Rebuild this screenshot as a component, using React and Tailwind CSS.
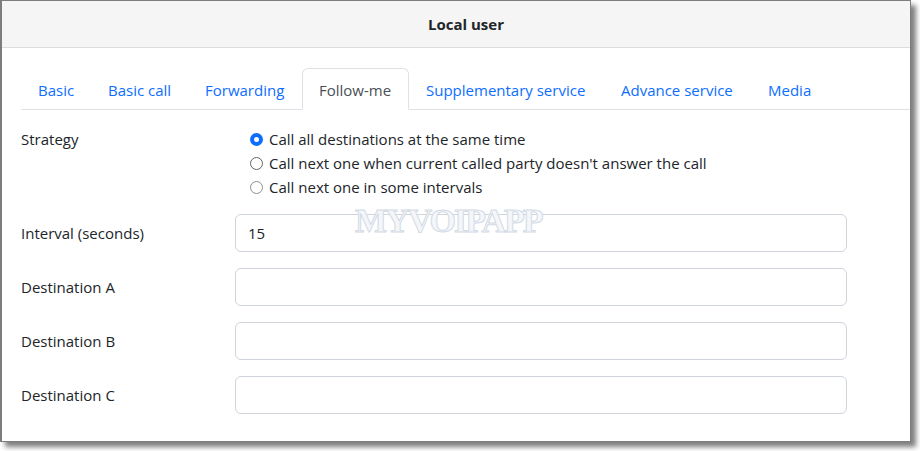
import React from "react";

const tabs = [
  { label: "Basic", w: "w-[70px]" },
  { label: "Basic call", w: "w-[97px]" },
  { label: "Forwarding", w: "w-[114px]" },
  { label: "Follow-me", w: "w-[107px]", active: true },
  { label: "Supplementary service", w: "w-[195px]" },
  { label: "Advance service", w: "w-[147px]" },
  { label: "Media", w: "w-[75px]" },
];

function Radio({ checked, tone }) {
  if (checked) {
    return (
      <span className="flex h-[13px] w-[13px] shrink-0 items-center justify-center rounded-full bg-[#0d6efd]">
        <span className="h-[5px] w-[5px] rounded-full bg-white" />
      </span>
    );
  }
  return (
    <span
      className={
        "h-[13px] w-[13px] shrink-0 rounded-full border-[1.5px] bg-white " +
        (tone === "dark" ? "border-[#5f6368]" : "border-[#8e8e93]")
      }
    />
  );
}

function Row({ label, value }) {
  return (
    <div className="mb-4 flex items-center">
      <div className="w-[214px] shrink-0 text-[#212529]">{label}</div>
      <div className="flex h-[38px] w-[612px] items-center rounded-[6px] border border-[#ced4da] bg-white px-3 text-[#212529]">
        {value}
      </div>
    </div>
  );
}

export default function App() {
  return (
    <div className="h-[451px] w-[920px] bg-white" style={{ fontFamily: '"Open Sans", "Noto Sans", sans-serif' }}>
      <div className="relative h-[442px] w-[911px] border border-l-2 border-[#7d7d7d] bg-white shadow-[5px_5px_5px_rgba(0,0,0,0.5)] text-[15px] leading-[24px]">
        <div className="flex h-[47px] items-center justify-center border-b border-[#dcdcdc] bg-[#f5f5f5] pl-[20px]">
          <span className="font-bold text-[#212529]">Local user</span>
        </div>
        <div className="pl-[19px] pt-[20px]">
          <div className="flex border-b border-[#dee2e6]">
            {tabs.map((t) => (
              <div
                key={t.label}
                className={
                  t.w +
                  " -mb-px whitespace-nowrap rounded-t-[6px] border px-4 pb-[7px] pt-[9px] " +
                  (t.active
                    ? "border-[#dee2e6] border-b-white bg-white text-[#495057]"
                    : "border-transparent text-[#0d6efd]")
                }
              >
                {t.label}
              </div>
            ))}
          </div>
          <div className="relative pt-[17px]">
            <div className="mb-[15px] flex">
              <div className="w-[214px] shrink-0 text-[#212529]">Strategy</div>
              <div className="flex flex-col pl-[15px] text-[#212529]">
                <div className="flex items-center gap-[6px]">
                  <Radio checked />
                  <span>Call all destinations at the same time</span>
                </div>
                <div className="flex items-center gap-[6px]">
                  <Radio tone="dark" />
                  <span>Call next one when current called party doesn't answer the call</span>
                </div>
                <div className="flex items-center gap-[6px]">
                  <Radio />
                  <span>Call next one in some intervals</span>
                </div>
              </div>
            </div>
            <Row label="Interval (seconds)" value="15" />
            <Row label="Destination A" />
            <Row label="Destination B" />
            <Row label="Destination C" />
            <div
              className="pointer-events-none absolute left-[334px] top-[94px] text-[34px] font-bold leading-none tracking-[-2px] text-[#f4f6f9] [-webkit-text-stroke:1px_#d3dbe6]"
              style={{ fontFamily: '"Liberation Serif", serif' }}
            >
              MYVOIPAPP
            </div>
          </div>
        </div>
      </div>
    </div>
  );
}
